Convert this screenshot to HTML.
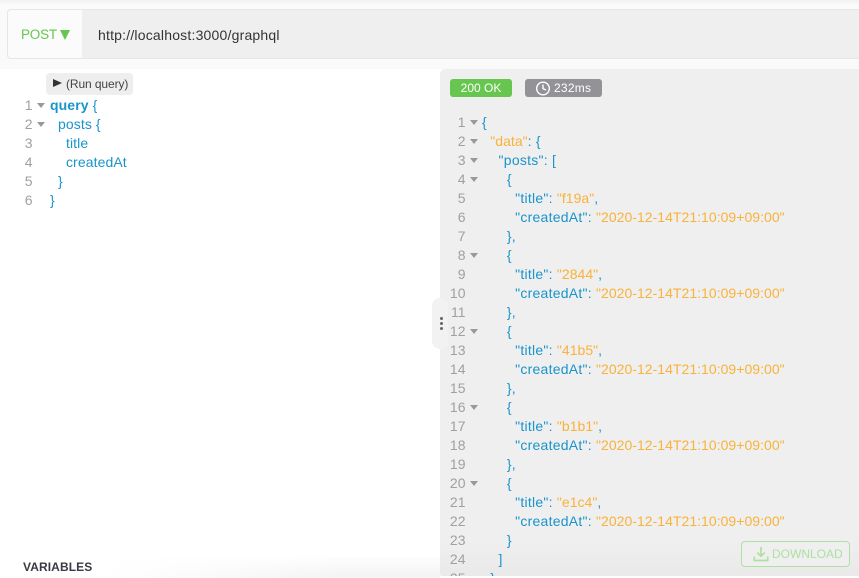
<!DOCTYPE html>
<html><head><meta charset="utf-8">
<style>
html,body{margin:0;padding:0;background:#fff}
#r{position:relative;width:859px;height:578px;overflow:hidden;background:#fff;font-family:"Liberation Sans",sans-serif;font-size:14px}
.a{position:absolute}
.l{position:absolute;height:19px;line-height:19px;white-space:pre;color:#1a94cb;letter-spacing:.25px}
.m{letter-spacing:.1px}
.n{position:absolute;height:19px;line-height:19px;color:#a0a0a0;text-align:right;width:24px;margin-left:-.5px}
.t{position:absolute;width:0;height:0;border-left:4px solid transparent;border-right:4px solid transparent;border-top:5px solid #999;margin-left:.5px}
.s{color:#f9b23a;letter-spacing:.03px}
</style></head><body><div id="r">
<div class="a" style="left:0;top:0;width:859px;height:10px;background:linear-gradient(#f1f1f1,#fbfbfb 50%)"></div>
<div class="a" style="left:0;top:9px;width:859px;height:60px;background:#fafafa"></div>
<div class="a" style="left:7px;top:9px;width:852px;height:50px;box-sizing:border-box;border:1px solid #e6e6e6;border-right:0;border-radius:4px 0 0 4px;background:#efefef"></div>
<div class="a" style="left:8px;top:10px;width:74px;height:48px;background:#fbfbfb;border-radius:3px 0 0 3px"></div>
<div class="a" style="left:21px;top:25px;line-height:20px;font-size:13.5px;letter-spacing:-.2px;color:#66c64f">POST</div>
<div class="a" style="left:60px;top:30px;width:0;height:0;border-left:5px solid transparent;border-right:5px solid transparent;border-top:10px solid #66c64f"></div>
<div class="a" style="left:98px;top:25px;line-height:20px;color:#333;letter-spacing:.2px">http://localhost:3000/graphql</div>

<div class="a" style="left:0;top:69px;width:440px;height:509px;background:#fff"></div>
<div class="a" style="left:46px;top:73px;width:87px;height:22px;border-radius:4px;background:#eee"></div>
<div class="a" style="left:53px;top:79px;width:0;height:0;border-top:4.5px solid transparent;border-bottom:4.5px solid transparent;border-left:9px solid #333"></div>
<div class="a" style="left:66px;top:74px;line-height:20px;font-size:12px;letter-spacing:-.1px;color:#444">(Run query)</div>

<div class="n" style="left:9px;top:96px">1</div><div class="t" style="left:36px;top:103px"></div><div class="l m" style="left:50px;top:96px"><b>query</b> {</div>
<div class="n" style="left:9px;top:115px">2</div><div class="t" style="left:36px;top:122px"></div><div class="l m" style="left:50px;top:115px">  posts {</div>
<div class="n" style="left:9px;top:134px">3</div><div class="l m" style="left:50px;top:134px">    title</div>
<div class="n" style="left:9px;top:153px">4</div><div class="l m" style="left:50px;top:153px">    createdAt</div>
<div class="n" style="left:9px;top:172px">5</div><div class="l m" style="left:50px;top:172px">  }</div>
<div class="n" style="left:9px;top:191px">6</div><div class="l m" style="left:50px;top:191px">}</div>

<div class="a" style="left:100px;top:555px;width:340px;height:23px;background:linear-gradient(rgba(244,244,244,0),#f3f3f3);-webkit-mask-image:linear-gradient(90deg,transparent,#000 70%);mask-image:linear-gradient(90deg,transparent,#000 70%)"></div>
<div class="a" style="left:23px;top:559px;line-height:17px;font-size:12px;font-weight:bold;letter-spacing:.1px;color:#3a3a42">VARIABLES</div>

<div class="a" style="left:440px;top:69px;width:419px;height:509px;background:#efefef;border-radius:5px 0 0 5px"></div>
<div class="a" style="left:440px;top:540px;width:419px;height:38px;background:linear-gradient(rgba(235,235,235,0),#e9e9e9);border-radius:0 0 0 5px"></div>
<div class="a" style="left:432px;top:298px;width:16px;height:51px;background:#f2f2f2;border-radius:8px"></div>
<div class="a" style="left:439.5px;top:317px;width:3px;height:3px;border-radius:2px;background:#666"></div>
<div class="a" style="left:439.5px;top:322px;width:3px;height:3px;border-radius:2px;background:#666"></div>
<div class="a" style="left:439.5px;top:327px;width:3px;height:3px;border-radius:2px;background:#666"></div>

<div class="a" style="left:450px;top:79px;width:62px;height:18px;border-radius:3px;background:#66c64f;color:#fff;font-size:12px;line-height:18px;text-align:center">200 OK</div>
<div class="a" style="left:525px;top:79px;width:77px;height:18px;border-radius:3px;background:#939397"></div>
<svg class="a" style="left:535px;top:80px" width="16" height="16" viewBox="0 0 16 16" fill="none" stroke="#fff" stroke-width="1.4"><circle cx="8" cy="8.5" r="6.3"/><path d="M8 4.5V8.7L11 10"/></svg>
<div class="a" style="left:554px;top:79px;color:#fff;font-size:12px;letter-spacing:.25px;line-height:18px">232ms</div>

<div class="n" style="left:442px;top:113px">1</div><div class="t" style="left:469px;top:120px"></div><div class="l" style="left:482px;top:113px">{</div>
<div class="n" style="left:442px;top:132px">2</div><div class="t" style="left:469px;top:139px"></div><div class="l" style="left:482px;top:132px">  <span class="s">"data"</span>: {</div>
<div class="n" style="left:442px;top:151px">3</div><div class="t" style="left:469px;top:158px"></div><div class="l" style="left:482px;top:151px">    "posts": [</div>
<div class="n" style="left:442px;top:170px">4</div><div class="t" style="left:469px;top:177px"></div><div class="l" style="left:482px;top:170px">      {</div>
<div class="n" style="left:442px;top:189px">5</div><div class="l" style="left:482px;top:189px">        "title": <span class="s">"f19a"</span>,</div>
<div class="n" style="left:442px;top:208px">6</div><div class="l" style="left:482px;top:208px">        "createdAt": <span class="s">"2020-12-14T21:10:09+09:00"</span></div>
<div class="n" style="left:442px;top:227px">7</div><div class="l" style="left:482px;top:227px">      },</div>
<div class="n" style="left:442px;top:246px">8</div><div class="t" style="left:469px;top:253px"></div><div class="l" style="left:482px;top:246px">      {</div>
<div class="n" style="left:442px;top:265px">9</div><div class="l" style="left:482px;top:265px">        "title": <span class="s">"2844"</span>,</div>
<div class="n" style="left:442px;top:284px">10</div><div class="l" style="left:482px;top:284px">        "createdAt": <span class="s">"2020-12-14T21:10:09+09:00"</span></div>
<div class="n" style="left:442px;top:303px">11</div><div class="l" style="left:482px;top:303px">      },</div>
<div class="n" style="left:442px;top:322px">12</div><div class="t" style="left:469px;top:329px"></div><div class="l" style="left:482px;top:322px">      {</div>
<div class="n" style="left:442px;top:341px">13</div><div class="l" style="left:482px;top:341px">        "title": <span class="s">"41b5"</span>,</div>
<div class="n" style="left:442px;top:360px">14</div><div class="l" style="left:482px;top:360px">        "createdAt": <span class="s">"2020-12-14T21:10:09+09:00"</span></div>
<div class="n" style="left:442px;top:379px">15</div><div class="l" style="left:482px;top:379px">      },</div>
<div class="n" style="left:442px;top:398px">16</div><div class="t" style="left:469px;top:405px"></div><div class="l" style="left:482px;top:398px">      {</div>
<div class="n" style="left:442px;top:417px">17</div><div class="l" style="left:482px;top:417px">        "title": <span class="s">"b1b1"</span>,</div>
<div class="n" style="left:442px;top:436px">18</div><div class="l" style="left:482px;top:436px">        "createdAt": <span class="s">"2020-12-14T21:10:09+09:00"</span></div>
<div class="n" style="left:442px;top:455px">19</div><div class="l" style="left:482px;top:455px">      },</div>
<div class="n" style="left:442px;top:474px">20</div><div class="t" style="left:469px;top:481px"></div><div class="l" style="left:482px;top:474px">      {</div>
<div class="n" style="left:442px;top:493px">21</div><div class="l" style="left:482px;top:493px">        "title": <span class="s">"e1c4"</span>,</div>
<div class="n" style="left:442px;top:512px">22</div><div class="l" style="left:482px;top:512px">        "createdAt": <span class="s">"2020-12-14T21:10:09+09:00"</span></div>
<div class="n" style="left:442px;top:531px">23</div><div class="l" style="left:482px;top:531px">      }</div>
<div class="n" style="left:442px;top:550px">24</div><div class="l" style="left:482px;top:550px">    ]</div>
<div class="a" style="left:440px;top:569px;width:419px;height:7px;overflow:hidden">
<div class="n" style="left:2px;top:0">25</div><div class="l" style="left:42px;top:0">  }</div></div>
<div class="a" style="left:440px;top:576px;width:419px;height:2px;background:#fff"></div>

<div class="a" style="left:741px;top:541px;width:109px;height:26px;box-sizing:border-box;border:1px solid #aee0a2;border-radius:4px;background:#efefef"></div>
<svg class="a" style="left:753px;top:546px" width="16" height="16" viewBox="0 0 16 16" fill="none" stroke="#aee0a2" stroke-width="1.7"><path d="M8 1V10M4.3 6.6L8 10.2L11.7 6.6M1.3 10.5V14.5H14.7V10.5"/></svg>
<div class="a" style="left:772px;top:546px;line-height:16px;font-size:12px;color:#aee0a2">DOWNLOAD</div>
</div></body></html>
